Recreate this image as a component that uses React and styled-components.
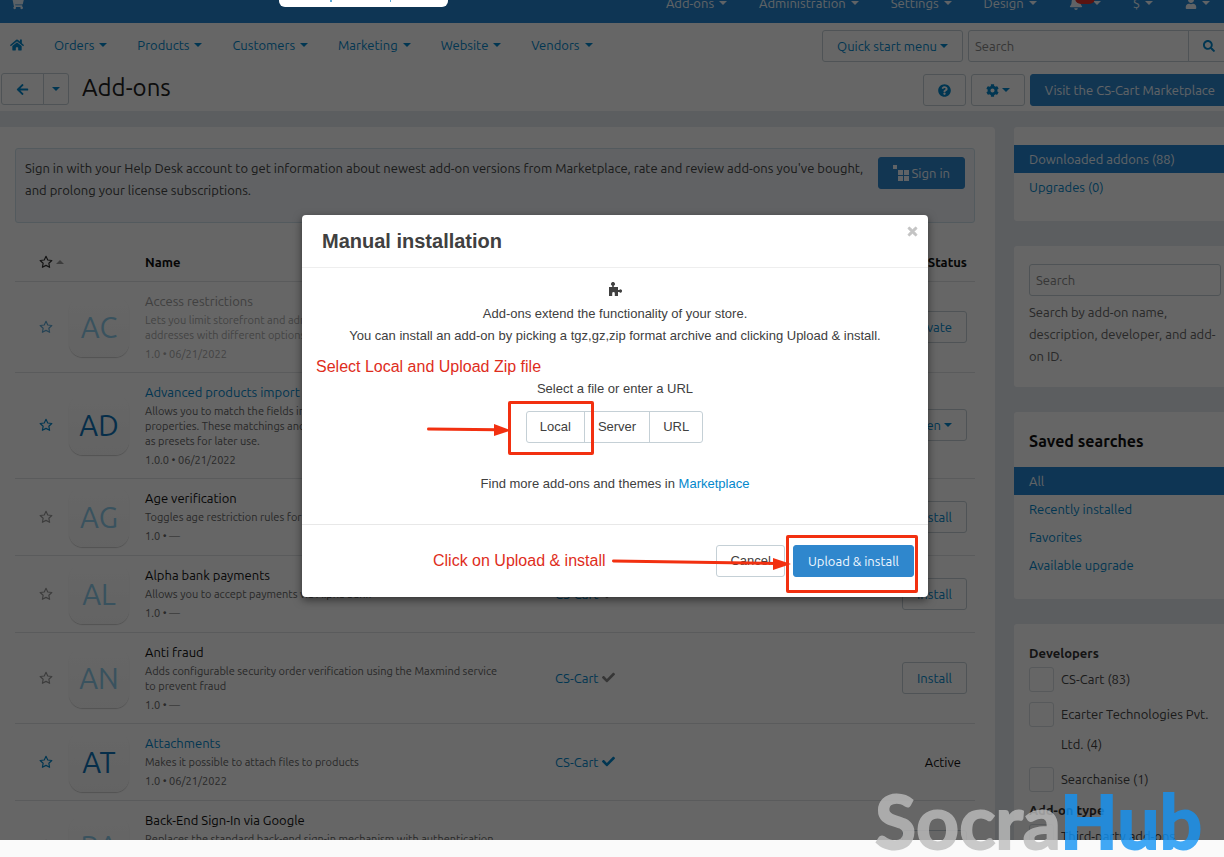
import React, { useState } from 'react';
import styled, { createGlobalStyle, css } from 'styled-components';
import {
  FaHome,
  FaArrowLeft,
  FaQuestionCircle,
  FaCog,
  FaSearch,
  FaCheck,
  FaBell,
  FaUser,
  FaShoppingCart,
  FaTimes,
} from 'react-icons/fa';

// --- Global ---
const GlobalStyle = createGlobalStyle`
  *, *::before, *::after {
    box-sizing: border-box;
  }

  body {
    margin: 0;
    background: #fafafa;
    color: #333;
    font-family: Ubuntu, 'Noto Sans', 'Open Sans', sans-serif;
    font-size: 13px;
    line-height: 22px;
  }

  button, input {
    font: inherit;
  }

  a {
    color: #0388cc;
    text-decoration: none;
  }
`;

const Page = styled.div`
  display: flex;
  flex-direction: column;
  height: 100vh;
  overflow: hidden;
  position: relative;
`;

const Stage = styled.div`
  position: relative;
  flex: 1;
  min-height: 0;
  overflow: hidden;
  background: #e7ebef;
`;

const Shell = styled.div`
  width: calc(100% + 6px);
`;

const BottomStrip = styled.div`
  height: 17px;
  background: #fafafa;
`;

// --- Shared bits ---
const Caret = styled.span`
  display: inline-block;
  border: 4px solid transparent;
  border-top-color: currentColor;
  border-bottom: 0;
  vertical-align: middle;

  ${({ $up }) =>
    $up &&
    css`
      border-top: 0;
      border-bottom: 4px solid #999;
    `}
`;

const Button = styled.button`
  display: inline-flex;
  align-items: center;
  justify-content: center;
  gap: 3px;
  height: 32px;
  padding: 0 14px;
  border: 1px solid #c5d0d6;
  border-radius: 3px;
  background: ${({ $primary }) => ($primary ? '#2f87cd' : 'transparent')};
  color: ${({ $primary }) => ($primary ? '#eff8ff' : '#0388cc')};
  white-space: nowrap;
  cursor: pointer;

  ${({ $primary }) =>
    $primary &&
    css`
      border-color: #2f87cd;
    `}
`;

const TextInput = styled.input`
  height: 32px;
  min-width: 0;
  padding: 0 6px;
  border: 1px solid #c5d0d6;
  border-radius: 3px;
  background: transparent;
  color: #333;

  &::placeholder {
    color: #888;
    opacity: 1;
  }
`;

const StarIcon = ({ color }) => (
  <svg width="14" height="14" viewBox="0 0 24 24" fill="none" stroke={color} strokeWidth="2" strokeLinejoin="round" aria-hidden="true">
    <path d="M12 2.2l3 6.3 7 .9-5.1 4.8 1.3 6.9L12 17.800l-6.200 3.300 1.300-6.900L2 9.400l7-.9z" />
  </svg>
);

const PuzzleIcon = () => (
  <svg width="14" height="14" viewBox="0 0 14 14" fill="#404040" aria-hidden="true">
    <path d="M1 5h3.200V3.700A1.900 1.900 0 1 1 5.800 3.700V5H10v3h1.200A1.600 1.600 0 1 1 11.200 10H10v4H6.800v-2.600a1.300 1.300 0 0 0-2.600 0V14H1z" />
  </svg>
);

const GridIcon = () => (
  <svg width="16" height="16" viewBox="0 0 16 16" fill="#eff8ff" aria-hidden="true">
    <path d="M0 0h4v4H0zM5 5h5v5H5zM11 5h5v5h-5zM5 11h5v5H5zM11 11h5v5h-5z" />
  </svg>
);

// --- Top bar ---
const TopBar = styled.div`
  height: 40px;
  margin-top: -17px;
  padding: 0 20px 0 10px;
  display: flex;
  align-items: center;
  justify-content: space-between;
  background: #2385d1;
  color: #e3f3ff;
`;

const TopMenu = styled.nav`
  display: flex;
  gap: 32px;
`;

const TopLink = styled.a`
  position: relative;
  display: flex;
  align-items: center;
  gap: ${({ $wide }) => ($wide ? 10 : 5)}px;
  color: #eff8ff;
`;

const BellBadge = styled.span`
  position: absolute;
  left: 6px;
  top: 0;
  width: 20px;
  height: 12px;
  border-radius: 6px;
  background: #e0342c;
`;

// --- Header ---
const Header = styled.header`
  background: #fff;
`;

const HeaderRow = styled.div`
  display: flex;
  align-items: center;
  justify-content: space-between;
  height: ${({ $height }) => $height}px;
  padding-left: ${({ $left }) => $left}px;
`;

const MainNav = styled.nav`
  display: flex;
  align-items: center;
  gap: 30px;
  padding-bottom: 2px;
`;

const NavLink = styled.a`
  display: flex;
  align-items: center;
  gap: 5px;
`;

const Tools = styled.div`
  display: flex;
  align-items: center;
  gap: 5px;
`;

const SearchGroup = styled.form`
  display: flex;

  ${TextInput} {
    width: 221px;
    border-radius: 3px 0 0 3px;
  }

  ${Button} {
    margin-left: -1px;
    border-radius: 0 3px 3px 0;
  }
`;

const BackGroup = styled.div`
  display: flex;

  ${Button}:first-child {
    border-radius: 3px 0 0 3px;
  }

  ${Button}:last-child {
    margin-left: -1px;
    padding: 0 8px;
    border-radius: 0 3px 3px 0;
  }
`;

const TitleGroup = styled.div`
  display: flex;
  align-items: center;
  gap: 13px;
  padding-bottom: 2px;
`;

const PageTitle = styled.h1`
  margin: 0;
  padding-bottom: 3px;
  font-size: 24px;
  font-weight: 400;
  line-height: 32px;
  color: #222;
`;

// --- Content ---
const Columns = styled.div`
  display: flex;
  align-items: flex-start;
  gap: 19px;
  padding-top: 16px;
`;

const Panel = styled.main`
  flex: 1;
  min-width: 0;
  padding: 21px 20px 0 15px;
  border-radius: 0 4px 0 0;
  background: #fff;
`;

const Notice = styled.section`
  display: flex;
  justify-content: space-between;
  align-items: flex-start;
  min-height: 75px;
  padding: 8px 9px 20px;
  border: 1px solid #cfe2ea;
  border-radius: 3px;
  background: #f2f6fa;

  p {
    margin: 0;
    color: #444;
    white-space: nowrap;
  }
`;

const AddonTable = styled.table`
  width: 100%;
  margin-top: 21px;
  border-collapse: collapse;
  table-layout: fixed;

  th {
    height: 37px;
    padding: 0;
    text-align: left;
    font-weight: 700;
    color: #111;
    border-bottom: 1px solid #e0e4e6;
  }

  td {
    padding: 8px 0;
    border-bottom: 1px solid #e0e4e6;
    vertical-align: middle;
  }

  th:first-child, td:first-child {
    padding-left: 24px;
  }

  th:last-child, td:last-child {
    padding-right: 8px;
    text-align: right;
  }
`;

const StarButton = styled.button`
  display: flex;
  align-items: center;
  gap: 3px;
  padding: 0;
  border: 0;
  background: none;
  cursor: pointer;
`;

const Tile = styled.div`
  display: flex;
  align-items: center;
  justify-content: center;
  width: 60px;
  height: 60px;
  margin-left: 1px;
  border-radius: 14px;
  background: linear-gradient(#fff, #f8f8f8);
  box-shadow: 0 1px 1px rgba(0, 0, 0, 0.2);
  font-size: 29px;
  color: ${({ $dim }) => ($dim ? '#90cdec' : '#0f74b8')};
`;

const AddonInfo = styled.div`
  padding: 2px 0;
  font-size: 11px;
  line-height: 15px;
  color: ${({ $muted }) => ($muted ? '#aaa' : '#666')};
`;

const AddonName = styled.a`
  display: block;
  margin-bottom: 2px;
  font-size: 13px;
  line-height: 19px;
  color: ${({ $kind }) => ({ link: '#0388cc', muted: '#a0a0a0', plain: '#111' })[$kind]};
`;

const AddonMeta = styled.div`
  margin-top: 4px;
`;

const Developer = styled.div`
  display: flex;
  align-items: center;
  gap: 4px;
`;

const ActiveLabel = styled.span`
  padding-right: 6px;
  color: #111;
`;

// --- Sidebar ---
const Sidebar = styled.aside`
  width: 216px;
  display: flex;
  flex-direction: column;
  gap: 25px;
`;

const Card = styled.section`
  padding: 18px 0 20px;
  background: #fff;
  border-radius: 3px 0 0 3px;
`;

const CardBody = styled.div`
  padding: 0 9px 0 15px;
  color: #666;

  ${TextInput} {
    display: block;
    width: 100%;
    margin-bottom: 5px;
  }

  p {
    margin: 0;
  }
`;

const SideTitle = styled.h2`
  margin: 0 0 15px;
  padding: 0 15px;
  font-size: 16px;
  line-height: 22px;
  color: #111;
`;

const SideLink = styled.a`
  display: block;
  padding: 3px 15px;

  ${({ $active }) =>
    $active &&
    css`
      background: #2385d1;
      color: #eff8ff;
    `}
`;

const Fieldset = styled.fieldset`
  margin: 0;
  padding: 0 9px 0 15px;
  border: 0;

  legend {
    padding: 0;
    font-weight: 700;
    color: #333;
  }
`;

const CheckLabel = styled.label`
  display: flex;
  align-items: flex-start;
  gap: 7px;
  margin-bottom: 5px;
  line-height: 30px;
  color: #444;
`;

const Checkbox = styled.input`
  appearance: none;
  flex: none;
  width: 25px;
  height: 25px;
  margin: 3px 0 0;
  border: 1px solid #d9dfe3;
  border-radius: 3px;
  background: #fff;

  &:checked {
    background: #2385d1;
  }
`;

// --- Dialog ---
const Backdrop = styled.div`
  position: absolute;
  inset: 0 -6px 0 0;
  display: flex;
  justify-content: center;
  align-items: flex-start;
  padding-top: 215px;
  background: rgba(0, 0, 0, 0.6);
`;

const Dialog = styled.div`
  position: relative;
  width: 626px;
  border-radius: 4px;
  background: #fff;
  box-shadow: 0 3px 8px rgba(0, 0, 0, 0.5);
  color: #404040;
  font-family: 'Liberation Sans', Arial, sans-serif;
`;

const DialogHeader = styled.div`
  display: flex;
  justify-content: space-between;
  align-items: flex-start;
  padding: 10px 9px 10px 20px;
  border-bottom: 1px solid #eee;

  h3 {
    margin: 0;
    font-size: 20px;
    line-height: 32px;
  }
`;

const CloseButton = styled.button`
  display: flex;
  padding: 0;
  border: 0;
  background: none;
  color: #c4c4c4;
  font-size: 13px;
  cursor: pointer;

  svg {
    stroke: currentColor;
    stroke-width: 30px;
  }
`;

const DialogBody = styled.div`
  display: flex;
  flex-direction: column;
  align-items: center;
  padding: 13px 0 29px;
  text-align: center;

  p {
    margin: 0;
  }
`;

const SourceBlock = styled.div`
  margin: 31px 0 30px;
`;

const DialogButton = styled(Button)`
  padding: 0 13px;
  color: #404040;
`;

const SourceTabs = styled.div`
  display: flex;
  justify-content: center;
  margin-top: 11px;

  ${DialogButton} {
    margin-left: -1px;
    border-radius: 0;
  }

  > :first-child ${DialogButton} {
    border-radius: 3px 0 0 3px;
  }

  > ${DialogButton}:last-child {
    border-radius: 0 3px 3px 0;
  }
`;

const DialogFooter = styled.div`
  display: flex;
  justify-content: flex-end;
  gap: 8px;
  padding: 20px 14px;
  border-top: 1px solid #e8e8e8;
`;

const UploadButton = styled(Button)`
  font-family: Ubuntu, 'Noto Sans', 'Open Sans', sans-serif;
`;

// --- Annotations ---
const Marked = styled.span`
  position: relative;
  display: inline-flex;
`;

const MarkBox = styled.span`
  position: absolute;
  inset: ${({ $inset }) => $inset};
  border: 3px solid #f23010;
  border-radius: 2px;
  pointer-events: none;
`;

const Arrow = styled.svg`
  position: absolute;
  right: 100%;
  top: 10px;
  margin-right: ${({ $gap }) => $gap}px;
  overflow: visible;
  pointer-events: none;
`;

const Hint = styled.span`
  position: absolute;
  left: ${({ $left }) => $left}px;
  top: ${({ $top }) => $top}px;
  font-size: 16px;
  line-height: 22px;
  color: #de2d1c;
  white-space: nowrap;
`;

const Toast = styled.div`
  position: absolute;
  top: 0;
  left: 279px;
  width: 169px;
  height: 7px;
  border-radius: 0 0 6px 6px;
  background: #fff;

  svg {
    display: block;
  }
`;

const Watermark = styled.div`
  position: absolute;
  right: 22px;
  bottom: -8px;
  font-family: Lato, sans-serif;
  font-size: 75px;
  font-weight: 700;
  line-height: 90px;
  opacity: 0.8;
  color: #bdbdbd;
  -webkit-text-stroke: 2px #bdbdbd;
  stroke-linejoin: round;
  paint-order: stroke fill;
  pointer-events: none;

  span {
    color: #1494f5;
    -webkit-text-stroke-color: #1494f5;
  }
`;

// --- Data ---
const navItems = ['Orders', 'Products', 'Customers', 'Marketing', 'Website', 'Vendors'];
const topItems = ['Add-ons', 'Administration', 'Settings', 'Design'];
const savedSearches = ['All', 'Recently installed', 'Favorites', 'Available upgrade'];
const developers = ['CS-Cart (83)', 'Ecarter Technologies Pvt. Ltd. (4)', 'Searchanise (1)'];

const addons = [
  {
    code: 'AC',
    name: 'Access restrictions',
    kind: 'muted',
    desc: ['Lets you limit storefront and admin panel access by IP', 'addresses with different options'],
    meta: '1.0 • 06/21/2022',
    star: '#5fa9d4',
    dim: true,
    status: 'Activate',
  },
  {
    code: 'AD',
    name: 'Advanced products import',
    kind: 'link',
    desc: ['Allows you to match the fields in the file with product', 'properties. These matchings and settings can be saved', 'as presets for later use.'],
    meta: '1.0.0 • 06/21/2022',
    star: '#0388cc',
    status: 'Open',
    menu: true,
  },
  {
    code: 'AG',
    name: 'Age verification',
    kind: 'plain',
    desc: ['Toggles age restriction rules for products'],
    meta: '1.0 • —',
    star: '#999',
    dim: true,
    status: 'Install',
  },
  {
    code: 'AL',
    name: 'Alpha bank payments',
    kind: 'plain',
    desc: ['Allows you to accept payments via Alpha bank'],
    meta: '1.0 • —',
    star: '#999',
    dim: true,
    status: 'Install',
  },
  {
    code: 'AN',
    name: 'Anti fraud',
    kind: 'plain',
    desc: ['Adds configurable security order verification using the Maxmind service', 'to prevent fraud'],
    meta: '1.0 • —',
    star: '#999',
    dim: true,
    status: 'Install',
  },
  {
    code: 'AT',
    name: 'Attachments',
    kind: 'link',
    desc: ['Makes it possible to attach files to products'],
    meta: '1.0 • 06/21/2022',
    star: '#0388cc',
    verified: true,
    status: 'Active',
  },
  {
    code: 'BA',
    name: 'Back-End Sign-In via Google',
    kind: 'plain',
    desc: ['Replaces the standard back-end sign-in mechanism with authentication', 'via Google'],
    meta: '1.0 • —',
    star: '#999',
    dim: true,
    status: 'Install',
  },
];

function AddonRow({ addon }) {
  return (
    <tr>
      <td>
        <StarButton type="button" aria-label={`Favorite ${addon.name}`}>
          <StarIcon color={addon.star} />
        </StarButton>
      </td>
      <td>
        <Tile $dim={addon.dim}>{addon.code}</Tile>
      </td>
      <td>
        <AddonInfo $muted={addon.kind === 'muted'}>
          <AddonName href="#" $kind={addon.kind}>{addon.name}</AddonName>
          {addon.desc.map((line) => (
            <div key={line}>{line}</div>
          ))}
          <AddonMeta>{addon.meta}</AddonMeta>
        </AddonInfo>
      </td>
      <td>
        <Developer>
          <a href="#">CS-Cart</a>
          <FaCheck size={13} color={addon.verified ? '#0388cc' : '#888'} />
        </Developer>
      </td>
      <td>
        {addon.status === 'Active' ? (
          <ActiveLabel>Active</ActiveLabel>
        ) : (
          <Button type="button">
            {addon.status}
            {addon.menu && <Caret />}
          </Button>
        )}
      </td>
    </tr>
  );
}

function ManualInstall({ onClose }) {
  return (
    <Backdrop>
      <Dialog role="dialog" aria-labelledby="dialog-title">
        <DialogHeader>
          <h3 id="dialog-title">Manual installation</h3>
          <CloseButton type="button" aria-label="Close" onClick={onClose}>
            <FaTimes />
          </CloseButton>
        </DialogHeader>
        <DialogBody>
          <p><PuzzleIcon /></p>
          <p>Add-ons extend the functionality of your store.</p>
          <p>You can install an add-on by picking a tgz,gz,zip format archive and clicking Upload &amp; install.</p>
          <SourceBlock>
            <p>Select a file or enter a URL</p>
            <SourceTabs>
              <Marked>
                <DialogButton type="button">Local</DialogButton>
                <MarkBox $inset="-10px -9px -12px -19px" />
                <Arrow $gap={17} width="83" height="16" viewBox="0 0 83 16">
                  <path d="M1.500 8L70 8.800" stroke="#f23010" strokeWidth="3" strokeLinecap="round" />
                  <path d="M67 3v12l17-5.500z" fill="#f23010" />
                </Arrow>
              </Marked>
              <DialogButton type="button">Server</DialogButton>
              <DialogButton type="button">URL</DialogButton>
            </SourceTabs>
          </SourceBlock>
          <p>Find more add-ons and themes in <a href="#">Marketplace</a></p>
        </DialogBody>
        <DialogFooter>
          <DialogButton type="button" onClick={onClose}>Cancel</DialogButton>
          <Marked>
            <UploadButton type="button" $primary>Upload &amp; install</UploadButton>
            <MarkBox $inset="-10px -4px -16px -7px" />
            <Arrow $gap={2} width="179" height="16" viewBox="0 0 179 16">
              <path d="M1.500 6L165 8.500" stroke="#f23010" strokeWidth="3" strokeLinecap="round" />
              <path d="M161 3v12l18-6z" fill="#f23010" />
            </Arrow>
          </Marked>
        </DialogFooter>
        <Hint $left={14} $top={141}>Select Local and Upload Zip file</Hint>
        <Hint $left={131} $top={335}>Click on Upload &amp; install</Hint>
      </Dialog>
    </Backdrop>
  );
}

function App() {
  const [open, setOpen] = useState(true);

  return (
    <Page>
      <GlobalStyle />
      <Stage>
        <Shell>
          <TopBar>
            <FaShoppingCart size={14} />
            <TopMenu>
              {topItems.map((item) => (
                <TopLink href="#" key={item}>{item} <Caret /></TopLink>
              ))}
              <TopLink href="#" aria-label="Notifications" $wide><FaBell size={14} /><BellBadge /><Caret /></TopLink>
              <TopLink href="#">$ <Caret /></TopLink>
              <TopLink href="#" aria-label="Account"><FaUser size={12} /> <Caret /></TopLink>
            </TopMenu>
          </TopBar>

          <Header>
            <HeaderRow $height={46} $left={10}>
              <MainNav>
                <NavLink href="#" aria-label="Home"><FaHome size={14} /></NavLink>
                {navItems.map((item) => (
                  <NavLink href="#" key={item}>{item} <Caret /></NavLink>
                ))}
              </MainNav>
              <Tools>
                <Button type="button">Quick start menu <Caret /></Button>
                <SearchGroup>
                  <TextInput type="text" placeholder="Search" aria-label="Search" />
                  <Button type="button" aria-label="Search"><FaSearch size={12} /></Button>
                </SearchGroup>
              </Tools>
            </HeaderRow>
            <HeaderRow $height={42} $left={1}>
              <TitleGroup>
                <BackGroup>
                  <Button type="button" aria-label="Back"><FaArrowLeft size={13} /></Button>
                  <Button type="button" aria-label="Recent pages"><Caret /></Button>
                </BackGroup>
                <PageTitle>Add-ons</PageTitle>
              </TitleGroup>
              <Tools>
                <Button type="button" aria-label="Help"><FaQuestionCircle size={13} /></Button>
                <Button type="button" aria-label="Settings"><FaCog size={13} /> <Caret /></Button>
                <Button type="button" $primary>Visit the CS-Cart Marketplace</Button>
              </Tools>
            </HeaderRow>
          </Header>

          <Columns>
            <Panel>
              <Notice>
                <p>
                  Sign in with your Help Desk account to get information about newest add-on versions from Marketplace, rate and review add-ons you've bought,
                  <br />
                  and prolong your license subscriptions.
                </p>
                <Button type="button" $primary><GridIcon />Sign in</Button>
              </Notice>
              <AddonTable>
                <colgroup>
                  <col width="53" />
                  <col width="77" />
                  <col width="410" />
                  <col />
                  <col width="120" />
                </colgroup>
                <thead>
                  <tr>
                    <th>
                      <StarButton type="button" aria-label="Sort by favorites">
                        <StarIcon color="#333" /> <Caret $up />
                      </StarButton>
                    </th>
                    <th aria-label="Icon" />
                    <th>Name</th>
                    <th aria-label="Developer" />
                    <th>Status</th>
                  </tr>
                </thead>
                <tbody>
                  {addons.map((addon) => (
                    <AddonRow addon={addon} key={addon.code} />
                  ))}
                </tbody>
              </AddonTable>
            </Panel>

            <Sidebar>
              <Card>
                <SideLink href="#" $active>Downloaded addons (88)</SideLink>
                <SideLink href="#">Upgrades (0)</SideLink>
              </Card>
              <Card>
                <CardBody>
                  <TextInput type="text" placeholder="Search" aria-label="Search add-ons" />
                  <p>Search by add-on name, description, developer, and add-on ID.</p>
                </CardBody>
              </Card>
              <Card>
                <SideTitle>Saved searches</SideTitle>
                {savedSearches.map((item, i) => (
                  <SideLink href="#" $active={i === 0} key={item}>{item}</SideLink>
                ))}
              </Card>
              <Card>
                <Fieldset>
                  <legend>Developers</legend>
                  {developers.map((item) => (
                    <CheckLabel key={item}><Checkbox type="checkbox" /> {item}</CheckLabel>
                  ))}
                </Fieldset>
                <Fieldset>
                  <legend>Add-on type</legend>
                  <CheckLabel><Checkbox type="checkbox" /> Third-party add-ons</CheckLabel>
                </Fieldset>
              </Card>
            </Sidebar>
          </Columns>
        </Shell>
        {open && <ManualInstall onClose={() => setOpen(false)} />}
        <Toast>
          <svg width="169" height="2" viewBox="0 0 169 2" fill="#5fa9d4" aria-hidden="true">
            <path d="M51 0h2v2h-2zM111 0h1v2h-1z" />
          </svg>
        </Toast>
      </Stage>
      <BottomStrip />
      <Watermark>Socra<span>Hub</span></Watermark>
    </Page>
  );
}

export default App;
